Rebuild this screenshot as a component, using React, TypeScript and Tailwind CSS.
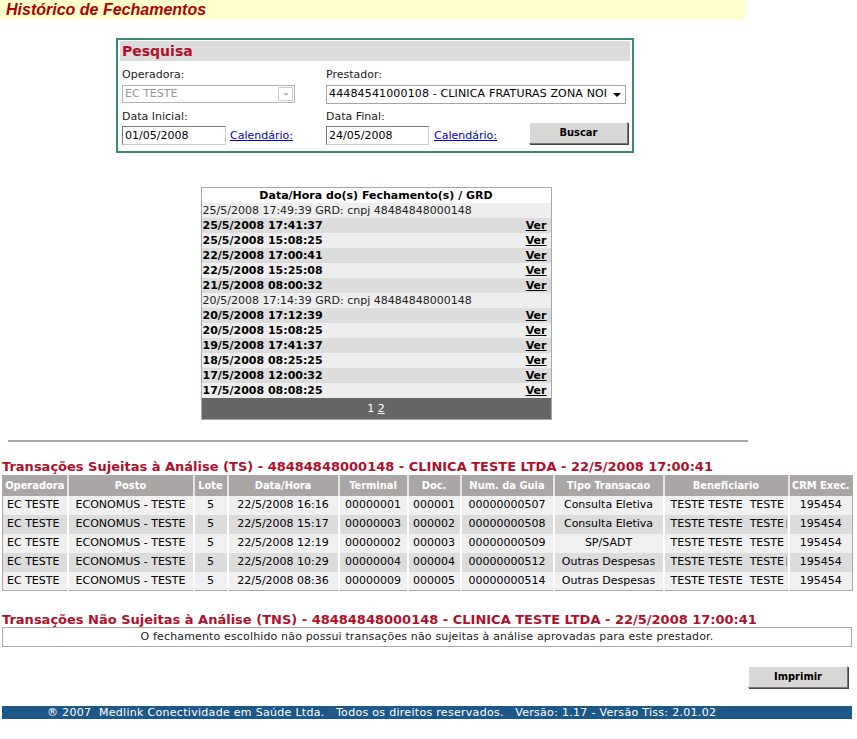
import React from "react"

const fechamentos: { data: string; grd?: boolean }[] = [
  { data: "25/5/2008 17:49:39 GRD: cnpj 48484848000148", grd: true },
  { data: "25/5/2008 17:41:37" },
  { data: "25/5/2008 15:08:25" },
  { data: "22/5/2008 17:00:41" },
  { data: "22/5/2008 15:25:08" },
  { data: "21/5/2008 08:00:32" },
  { data: "20/5/2008 17:14:39 GRD: cnpj 48484848000148", grd: true },
  { data: "20/5/2008 17:12:39" },
  { data: "20/5/2008 15:08:25" },
  { data: "19/5/2008 17:41:37" },
  { data: "18/5/2008 08:25:25" },
  { data: "17/5/2008 12:00:32" },
  { data: "17/5/2008 08:08:25" },
]

const transacoes: [string[], boolean][] = [
  [["EC TESTE", "ECONOMUS - TESTE", "5", "22/5/2008 16:16", "00000001", "000001", "00000000507", "Consulta Eletiva", "TESTE TESTE  TESTE", "195454"], false],
  [["EC TESTE", "ECONOMUS - TESTE", "5", "22/5/2008 15:17", "00000003", "000002", "00000000508", "Consulta Eletiva", "TESTE TESTE  TESTE", "195454"], true],
  [["EC TESTE", "ECONOMUS - TESTE", "5", "22/5/2008 12:19", "00000002", "000003", "00000000509", "SP/SADT", "TESTE TESTE  TESTE", "195454"], false],
  [["EC TESTE", "ECONOMUS - TESTE", "5", "22/5/2008 10:29", "00000004", "000004", "00000000512", "Outras Despesas", "TESTE TESTE  TESTE", "195454"], true],
  [["EC TESTE", "ECONOMUS - TESTE", "5", "22/5/2008 08:36", "00000009", "000005", "00000000514", "Outras Despesas", "TESTE TESTE  TESTE", "195454"], false],
]

const colunas = [
  { nome: "Operadora", w: "w-[65px]" },
  { nome: "Posto", w: "w-[126px]" },
  { nome: "Lote", w: "w-[34px]" },
  { nome: "Data/Hora", w: "w-[111px]" },
  { nome: "Terminal", w: "w-[69px]" },
  { nome: "Doc.", w: "w-[53px]" },
  { nome: "Num. da Guia", w: "w-[93px]" },
  { nome: "Tipo Transacao", w: "w-[110px]" },
  { nome: "Beneficiario", w: "w-[125px]" },
  { nome: "CRM Exec.", w: "w-[64px]" },
]

const verdana = "font-['Verdana','DejaVu_Sans',sans-serif]"

function Botao({ children, className = "" }: { children: React.ReactNode; className?: string }) {
  return (
    <button
      className={`h-[22px] bg-[#d9d6d6] border border-t-white border-l-white border-r-[#777] border-b-[#777] shadow-[1px_1px_0_#444] text-[11px] font-bold text-black font-['DejaVu_Sans_Condensed','DejaVu_Sans',sans-serif] ${className}`}
    >
      {children}
    </button>
  )
}

export default function App() {
  return (
    <div className={`w-[857px] h-[739px] bg-white text-[11px] text-black ${verdana}`}>
      {/* titulo */}
      <div className="w-[745px] h-[19px] bg-[#ffffcc] pl-[6px]">
        <h1 className="font-['Liberation_Sans',Arial,sans-serif] italic font-bold text-[16px] leading-[20px] text-[#b00000]">
          Histórico de Fechamentos
        </h1>
      </div>

      {/* pesquisa */}
      <div className="w-[750px] pt-[19px] flex justify-center">
        <div className="w-[518px] h-[115px] border-2 border-[#3d8a72] px-[2px] pt-[1px]">
          <div className="h-[20px] bg-[#dcdcdc] pl-[2px] text-[14px] leading-[20px] font-bold text-[#b0102a]">Pesquisa</div>
          <div className="grid grid-cols-[204px_1fr] pl-[2px] pt-[6px]">
            <div>
              <div className="leading-[15px] text-[#222]">Operadora:</div>
              <div className="mt-[3px] w-[173px] h-[18px] border border-[#b5b5b5] flex items-center justify-between pl-[2px] pr-[1px] text-[#999]">
                <span>EC TESTE</span>
                <span className="w-[15px] h-[14px] border border-[#ccc] flex items-center justify-center">
                  <span className="w-0 h-0 border-l-[3px] border-r-[3px] border-t-[3px] border-l-transparent border-r-transparent border-t-[#bbb]" />
                </span>
              </div>
            </div>
            <div>
              <div className="leading-[15px] text-[#222]">Prestador:</div>
              <div className="mt-[3px] w-[300px] h-[19px] border border-[#a5a5a5] flex items-center justify-between pl-[2px] pr-[4px] overflow-hidden whitespace-nowrap">
                <span className="tracking-[0.15px]">44484541000108 - CLINICA FRATURAS ZONA NOI</span>
                <span className="w-0 h-0 border-l-[4px] border-r-[4px] border-t-[4px] border-l-transparent border-r-transparent border-t-black" />
              </div>
            </div>
            <div className="pt-[5px]">
              <div className="leading-[15px] text-[#222]">Data Inicial:</div>
              <div className="mt-[2px] flex items-center gap-[4px]">
                <div className="w-[104px] h-[19px] border border-[#7a7a7a] border-r-[#ccc] border-b-[#ccc] pl-[2px] leading-[17px]">01/05/2008</div>
                <a className="text-[#0000cc] underline leading-[14px]">Calendário:</a>
              </div>
            </div>
            <div className="pt-[5px] flex">
              <div>
                <div className="leading-[15px] text-[#222]">Data Final:</div>
                <div className="mt-[2px] flex items-center gap-[5px]">
                  <div className="w-[103px] h-[19px] border border-[#7a7a7a] border-r-[#ccc] border-b-[#ccc] pl-[2px] leading-[17px]">24/05/2008</div>
                  <a className="text-[#0000cc] underline leading-[14px]">Calendário:</a>
                </div>
              </div>
              <div className="pl-[32px] pt-[13px]">
                <Botao className="w-[99px]">Buscar</Botao>
              </div>
            </div>
          </div>
        </div>
      </div>

      {/* fechamentos */}
      <div className="w-[752px] pt-[34px] flex justify-center">
        <div className="w-[351px] border border-[#a8a8a8]">
          <div className="h-[15px] leading-[15px] text-center font-bold bg-white">Data/Hora do(s) Fechamento(s) / GRD</div>
          {fechamentos.map((f, i) => (
            <div
              key={i}
              className={`h-[15px] leading-[15px] flex justify-between pl-[1px] pr-[4px] ${
                f.grd ? "bg-[#eeeeee] text-[#222]" : i % 2 === 0 ? "bg-[#eeeeee] font-bold" : "bg-[#dddddd] font-bold"
              }`}
            >
              <span>{f.data}</span>
              {!f.grd && <a className="underline font-bold">Ver</a>}
            </div>
          ))}
          <div className="h-[21px] bg-[#666666] text-white text-center leading-[21px]">
            1 <a className="underline">2</a>
          </div>
        </div>
      </div>

      <div className="pt-[20px] pl-[8px]">
        <hr className="w-[740px] border-0 border-t-2 border-[#a8a8a8]" />
      </div>

      {/* TS */}
      <div className="px-[2px] pt-[17px]">
        <h2 className="text-[13px] font-bold leading-[15px] text-[#b0102a] whitespace-nowrap">
          Transações Sujeitas à Análise (TS) - 48484848000148 - CLINICA TESTE LTDA - 22/5/2008 17:00:41
        </h2>
        <table className="w-[850px] table-fixed border-collapse border border-[#a8a8a8] mt-[1px]">
          <colgroup>
            {colunas.map(c => (
              <col key={c.nome} className={c.w} />
            ))}
          </colgroup>
          <thead>
            <tr className="bg-[#aaa6a6] h-[20px]">
              {colunas.map(c => (
                <th
                  key={c.nome}
                  className="text-white font-bold text-center border-l-2 border-[#e6e6e6] first:border-l-0 whitespace-nowrap overflow-hidden p-0 font-['DejaVu_Sans_Condensed','DejaVu_Sans',sans-serif]"
                >
                  {c.nome}
                </th>
              ))}
            </tr>
          </thead>
          <tbody>
            {transacoes.map(([t, cortado], i) => (
              <tr key={i} className={`h-[19px] ${i % 2 === 0 ? "bg-[#f0f0f0]" : "bg-[#dcdcdc]"}`}>
                {t.map((v, j) => (
                  <td
                    key={j}
                    className={`border-l-2 border-white first:border-l-0 whitespace-pre overflow-hidden p-0 ${
                      j === 0 ? "pl-[4px]" : j === 8 ? "pl-[6px]" : "text-center"
                    }`}
                  >
                    {v}
                    {j === 8 && cortado && <span className="inline-block w-[1px] h-[9px] ml-[2px] bg-[#999] align-middle" />}
                  </td>
                ))}
              </tr>
            ))}
          </tbody>
        </table>
      </div>

      {/* TNS */}
      <div className="px-[2px] pt-[21px]">
        <h2 className="text-[13px] font-bold leading-[15px] text-[#b0102a] whitespace-nowrap">
          Transações Não Sujeitas à Análise (TNS) - 48484848000148 - CLINICA TESTE LTDA - 22/5/2008 17:00:41
        </h2>
        <div className="w-[850px] h-[20px] border border-[#a8a8a8] text-center leading-[18px] text-[#222] tracking-[0.15px]">
          O fechamento escolhido não possui transações não sujeitas à análise aprovadas para este prestador.
        </div>
      </div>

      <div className="flex justify-end pr-[9px] pt-[19px]">
        <Botao className="w-[100px]">Imprimir</Botao>
      </div>

      <div className="mx-[2px] mt-[18px] w-[850px] h-[13px] bg-[#1d5888] text-white leading-[13px] pl-[45px] whitespace-pre tracking-[0.3px]">
        ® 2007  Medlink Conectividade em Saúde Ltda.   Todos os direitos reservados.   Versão: 1.17 - Versão Tiss: 2.01.02
      </div>
    </div>
  )
}
